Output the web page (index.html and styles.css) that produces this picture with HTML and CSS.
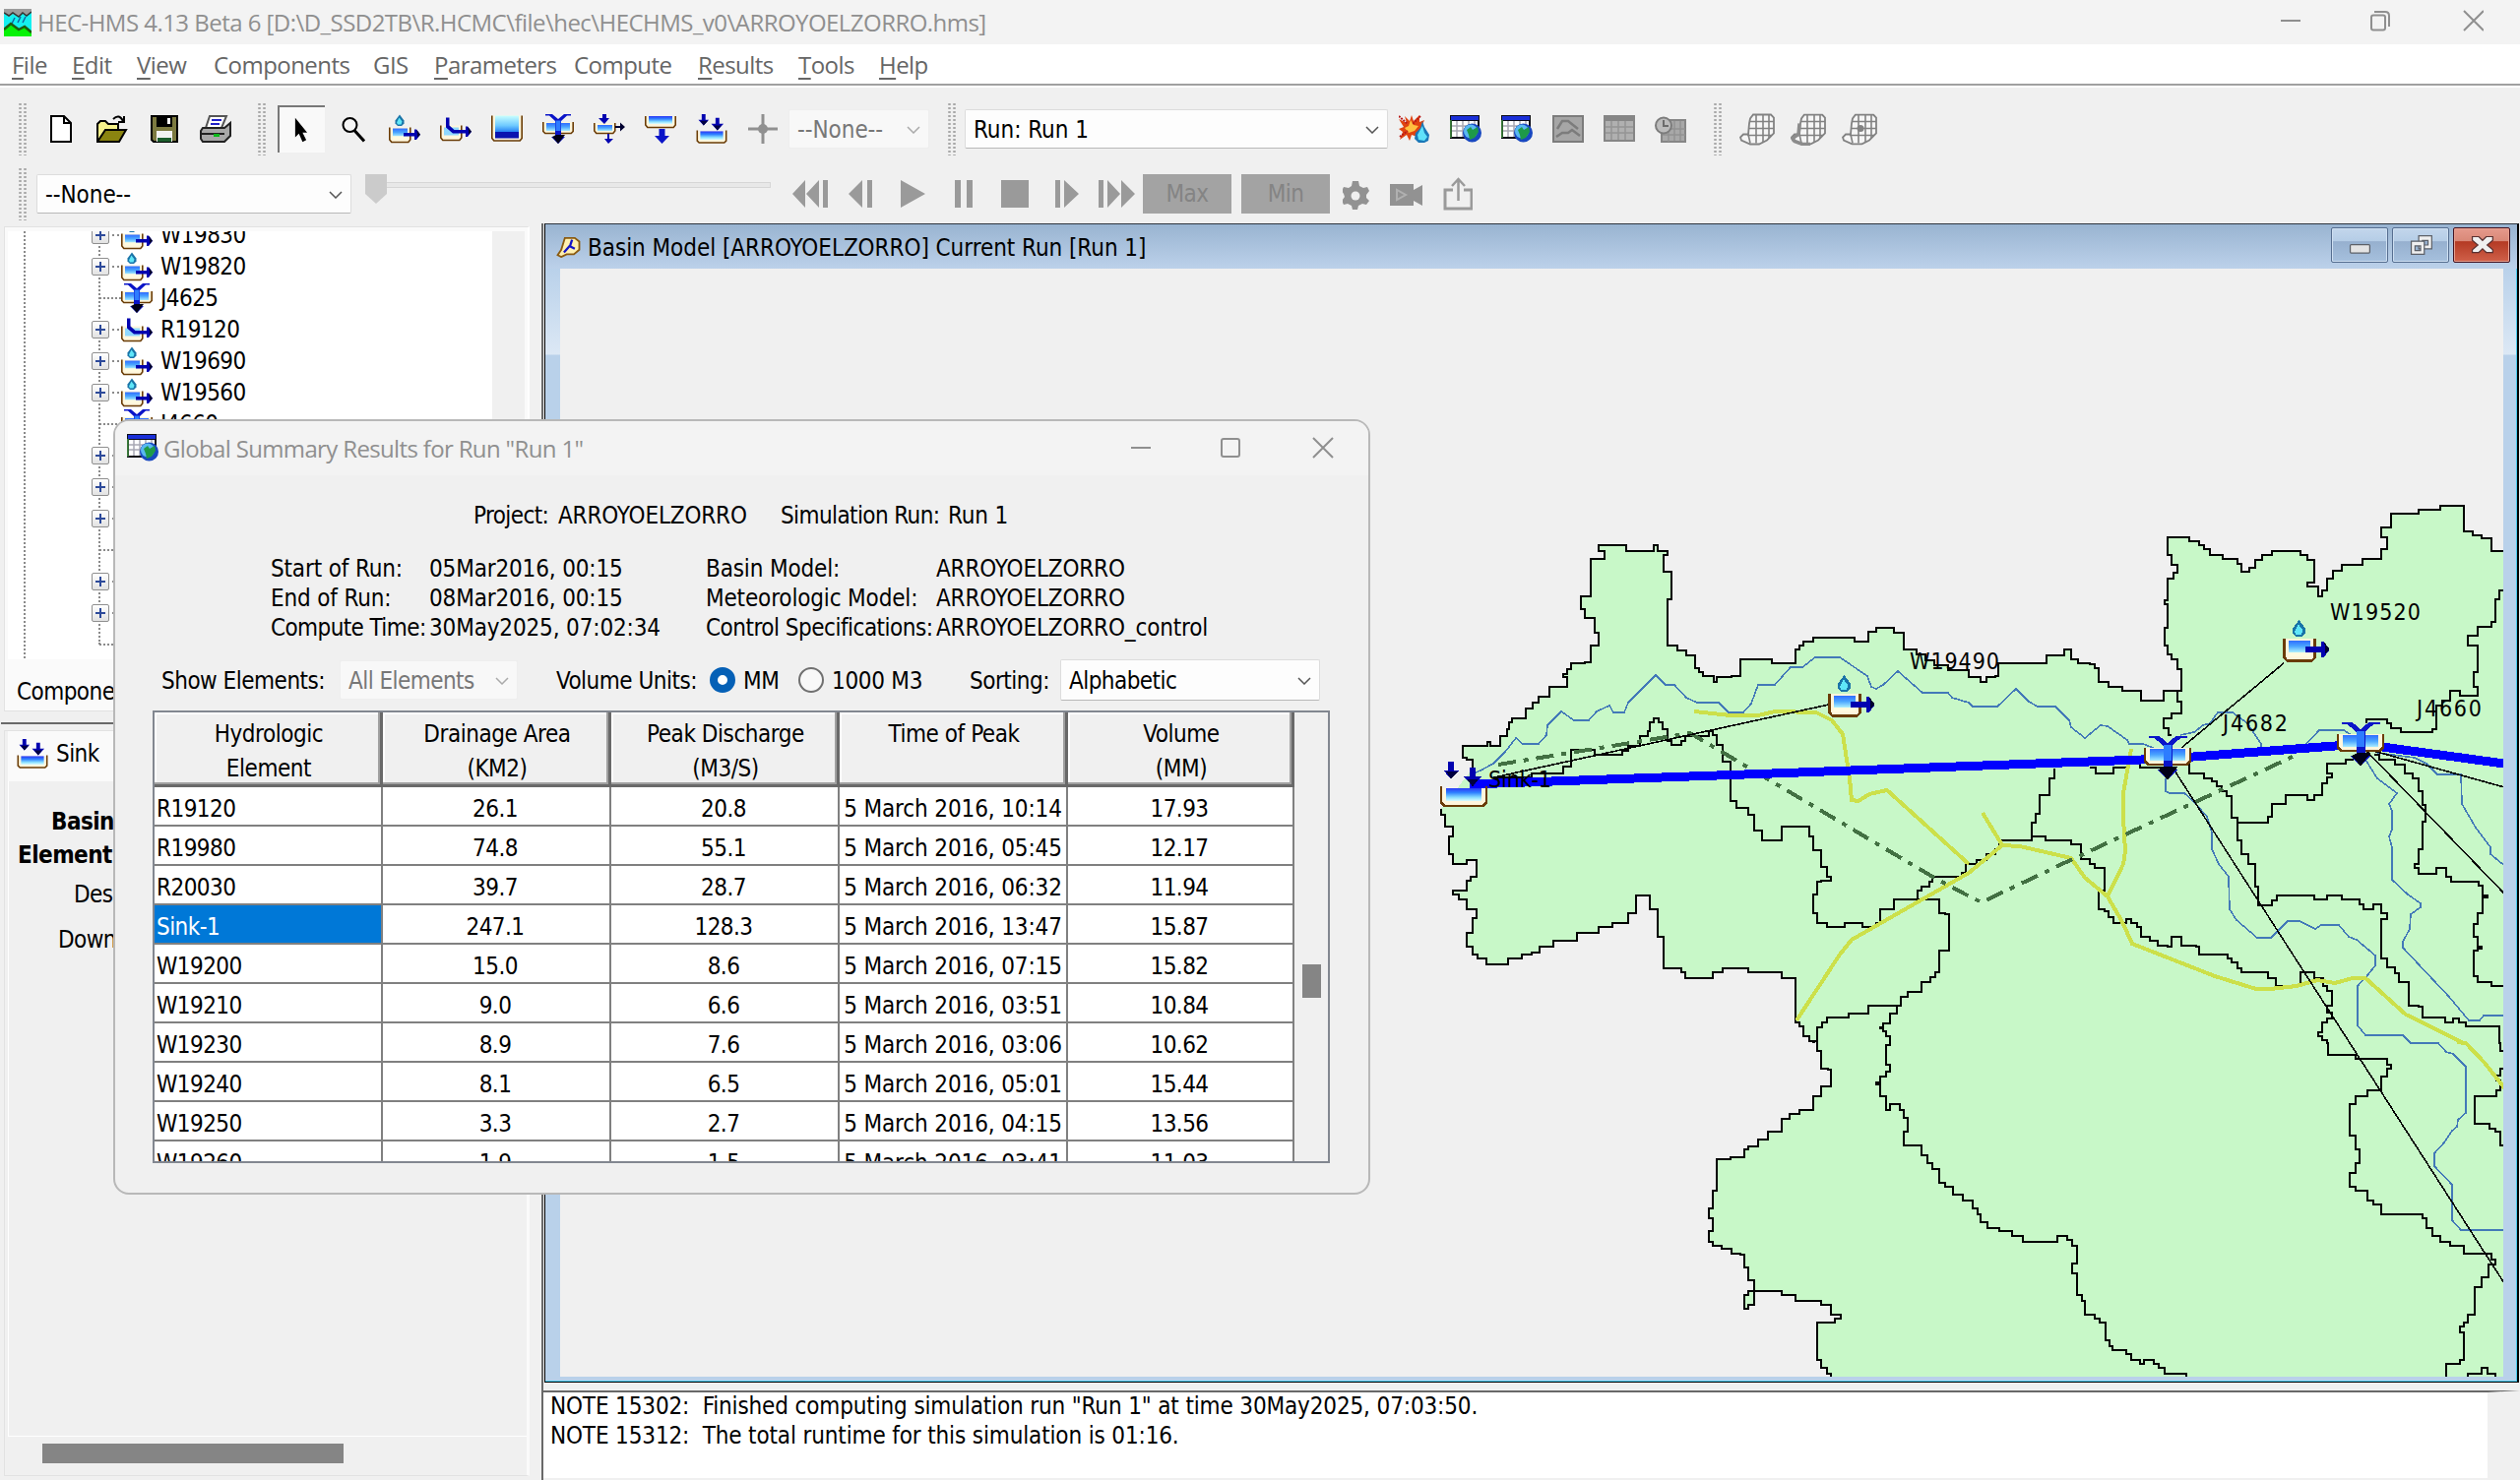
FILE: index.html
```html
<!DOCTYPE html>
<html lang="en">
<head>
<meta charset="utf-8">
<title>HEC-HMS 4.13 Beta 6</title>
<link rel="stylesheet" href="styles.css">
</head>
<body>
<svg class="defs" aria-hidden="true">
  <defs>
    <linearGradient id="gWater" x1="0" y1="0" x2="0" y2="1"><stop offset="0" stop-color="#2f6cff"/><stop offset=".5" stop-color="#4aa5ff"/><stop offset="1" stop-color="#a8ecff"/></linearGradient>
    <linearGradient id="gPool" x1="0" y1="0" x2="0" y2="1"><stop offset="0" stop-color="#c8ffff"/><stop offset=".45" stop-color="#6cc8ff"/><stop offset=".7" stop-color="#2a86f4"/><stop offset=".72" stop-color="#0a14b0"/><stop offset="1" stop-color="#0a14b0"/></linearGradient>
    <linearGradient id="gSink" x1="0" y1="0" x2="0" y2="1"><stop offset="0" stop-color="#2a35f5"/><stop offset=".35" stop-color="#2f80ff"/><stop offset=".7" stop-color="#86dcff"/><stop offset="1" stop-color="#e0ffff"/></linearGradient>
    <symbol id="sub" viewBox="0 0 32 29">
      <path d="M1 13v12l2 3h17l2-3V13" fill="#fff6dc"/><path d="M4 14h15v8H4z" fill="url(#gWater)"/><path d="M4 22h15v3H4z" fill="#fffbe0"/>
      <path d="M.8 13v12.500l2 2.500h17l2-2.500V13" fill="none" stroke="#6a3c06" stroke-width="1.600"/>
      <path d="M11 0l4.500 6v3l-2.500 2.500h-4L6.500 9V6z" fill="#1a74a8"/><path d="M10.500 3l3 4-1 3H9L8 8z" fill="#5fe6f8"/>
      <path d="M15 18.500h11V15h2l4 5.200-4 5.300h-2v-3.500H15z" fill="#0202b0"/><path d="M28 15l4 5.200-3 3v-4z" fill="#000030"/>
    </symbol>
    <symbol id="reach" viewBox="0 0 32 29">
      <path d="M1 11v12l2 3h17l2-3V11" fill="#fff6dc"/><path d="M4 13h15v8H4z" fill="#8fd8ff"/>
      <path d="M.8 11v12.500l2 2.500h17l2-2.500V11" fill="none" stroke="#6a3c06" stroke-width="1.600"/>
      <path d="M6 3h3.500v8l5 4.500H26V12h2l4 5.200-4 5.300h-2V19H13l-7-6z" fill="#0202b0"/><path d="M28 12l4 5.200-3 3v-4z" fill="#000030"/>
    </symbol>
    <symbol id="pool" viewBox="0 0 32 29"><path d="M1 1v24h30V1z" fill="#fff6dc"/><path d="M4 1h24v23H4z" fill="url(#gPool)"/><path d="M.8 1v23l2 2.500h26.400l2-2.500V1" fill="none" stroke="#6a3c06" stroke-width="1.600"/></symbol>
    <symbol id="junction" viewBox="0 0 32 30">
      <path d="M1 8v9l2 3h26l2-3V8" fill="#fff6dc"/><path d="M4 9h24v8H4z" fill="url(#gWater)"/>
      <path d="M.8 8v9.500l2 2h26.400l2-2V8" fill="none" stroke="#6a3c06" stroke-width="1.600"/>
      <path d="M3 0h7l6 5 6-5h7v1.500h-4L19 7v16h4l-7 7-7-7h4V7L7 1.500H3z" fill="#0a14c8"/><path d="M13.500 6.500h5V17h-5z" fill="#2d7cff"/><path d="M14 21h9l-7 9-6-7z" fill="#000018"/>
    </symbol>
    <symbol id="diversion" viewBox="0 0 32 30">
      <path d="M1 9v8l2 3h16l2-3V9" fill="#fff6dc"/><path d="M4 11h15v6H4z" fill="url(#gWater)"/><path d="M.8 9v8l2 2.500h17l2-2.500V9" fill="none" stroke="#6a3c06" stroke-width="1.600"/>
      <path d="M9 0h4v4h3l-5 6-6-6h4z" fill="#0202b0"/><path d="M14 20v5h-3l4 5 5-5h-4v-5z" fill="#0202b0"/><path d="M22 12h5V8.500l5 4.500-5 4.500V14h-5z" fill="#000030"/>
    </symbol>
    <symbol id="source" viewBox="0 0 32 30">
      <path d="M1 2v9l2 3h26l2-3V2" fill="#fff6dc"/><path d="M4 2h24v8H4z" fill="url(#gSink)"/><path d="M.8 2v9l2 2.500h26.400l2-2.500V2" fill="none" stroke="#6a3c06" stroke-width="1.600"/>
      <path d="M14.500 15h6v7H25l-7.500 8-7.500-8h4.500z" fill="#0a14c8"/>
    </symbol>
    <symbol id="sink" viewBox="0 0 32 31">
      <path d="M1 18v10l2 2h26l2-2V18" fill="#fff6dc"/><path d="M4 18h24v9H4z" fill="url(#gSink)"/><path d="M.8 17v11l2 2h26.400l2-2V17" fill="none" stroke="#6a3c06" stroke-width="1.600"/>
      <path d="M5.500 0h4v6h3.500L7.500 12 2 6h3.500z" fill="#0202b0"/><path d="M20 4h4v6h4.500L22 17l-6.500-7H20z" fill="#0202b0"/><path d="M4 7h8l-4.500 5zM18 12h8l-4 5z" fill="#000040"/>
    </symbol>
    <symbol id="globe" viewBox="0 0 32 28">
      <path d="M0 0h30v24H0z" fill="#0c0c18"/><path d="M1 1h28v4H1z" fill="#1a2fd8"/><path d="M2 6h26v16H2z" fill="#fff"/>
      <path d="M7 6v16M13 6v16M19 6v16M25 6v16M2 11h26M2 16h26" stroke="#a8a8b4" stroke-width="1.500"/><path d="M0 5h1.800v18H0z" fill="#3b7d3b"/>
      <circle cx="22.500" cy="18" r="9.500" fill="#1848c0"/><circle cx="21" cy="16.500" r="7" fill="#58b8f0"/><path d="M17 15l4-3 2 3 5-3 1 5-4 6-5 2-1-5z" fill="#1e9a48"/>
    </symbol>
    <symbol id="grid" viewBox="0 0 36 32">
      <path d="M14 1h18l3 3v16l-7 7-8 4h-9l-9-4-1-3 3-3h5l1-11 1-5z" fill="#f6f6f6" stroke="#828282" stroke-width="1.800"/>
      <path d="M17 1v29M24 1v28M30 1v24M10 8h25M9 15h26M8 22h25M9 21l2 9" stroke="#828282" stroke-width="1.600" fill="none"/>
    </symbol>
  </defs>
</svg>

<header class="titlebar">
  <svg class="app-icon" viewBox="0 0 28 28"><path d="M0 0h28v28H0z" fill="#14f0f0"/><path d="M0 0h28v3l-5 4-4-3-4 4-6-3-4 3-5-4z" fill="#9c9c9c"/><path d="M0 4l5 3 4-3 6 4 4-4 4 3 5-4" fill="none" stroke="#333" stroke-width="1.500"/><path d="M11 9l-3 6M17 8l-3 6M22 8l-3 6" stroke="#1464a0" stroke-width="1.500"/><path d="M0 21l7-6 8 6 6-4 7 6v5H0z" fill="#06f206"/><path d="M0 21l7-6 8 6 6-3 7 6" fill="none" stroke="#1c5c10" stroke-width="2.500"/></svg>
  <span class="segoe title-text">HEC-HMS 4.13 Beta 6 [D:\D_SSD2TB\R.HCMC\file\hec\HECHMS_v0\ARROYOELZORRO.hms]</span>
  <svg class="win-buttons" viewBox="0 0 206 24" fill="none" stroke="#8f8f8f" stroke-width="2"><path d="M0 12h20M186 2l20 20M206 2l-20 20"/><rect x="92" y="6.500" width="14" height="15" rx="2"/><path d="M95 3h11q4 0 4 4v11"/></svg>
</header>
<nav class="menubar segoe">
  <span><u>F</u>ile</span><span><u>E</u>dit</span><span><u>V</u>iew</span><span>Components</span><span>GIS</span><span><u>P</u>arameters</span><span>Compute</span><span><u>R</u>esults</span><span><u>T</u>ools</span><span><u>H</u>elp</span>
</nav>

<section class="toolbars">
  <div class="bar bar-main">
    <i class="grip"></i>
    <svg class="ic w22 new" viewBox="0 0 22 28"><path d="M1 1h13l7 7v19H1z" fill="#fff" stroke="#000" stroke-width="2"/><path d="M14 1v7h7" fill="none" stroke="#000" stroke-width="2"/></svg>
    <svg class="ic w32 open" viewBox="0 0 32 28"><path d="M1 27V9l3-3h5l3 3h10v6" fill="#f4f08a" stroke="#000" stroke-width="2"/><path d="M1 27l8-12h21l-7 12z" fill="#8a8410" stroke="#000" stroke-width="2"/><path d="M17 4q6-6 10 2M28 1v6h-6" fill="none" stroke="#000" stroke-width="2"/></svg>
    <svg class="ic w28 save" viewBox="0 0 28 28"><path d="M1 1h26v26H3l-2-2z" fill="#7c7a40" stroke="#000" stroke-width="2"/><path d="M6 1h16v11H6z" fill="#000"/><path d="M17 3h3v6h-3z" fill="#fff"/><path d="M6 16h16v11H6z" fill="#f2f2f2"/><path d="M7 23h14v4H7z" fill="#1c5c2c"/></svg>
    <svg class="ic w32 print" viewBox="0 0 32 28"><path d="M10 1h17l-5 12H6z" fill="#fff" stroke="#555" stroke-width="2"/><path d="M12 5h10M11 9h9" stroke="#2020c8" stroke-width="2"/><path d="M3 13h22l6-5v13l-6 6H3l-2-3v-8z" fill="#a8a8a8" stroke="#222" stroke-width="2"/><path d="M2 19h23" stroke="#222" stroke-width="2"/><path d="M14 19h6v3h-6z" fill="#0bb81a"/></svg>
    <i class="grip g2"></i>
    <span class="pressed"><svg viewBox="0 0 16 27"><path d="M2 0v21l4-4 4 9 4-2-4-8h5z" fill="#000"/></svg></span>
    <svg class="ic w24 lens" viewBox="0 0 24 27"><circle cx="8.500" cy="9.500" r="7" fill="#f6f6f6" stroke="#000" stroke-width="2"/><path d="M13 15l10 11" stroke="#000" stroke-width="3"/></svg>
    <div class="model-icons">
      <svg class="ic w32"><use href="#sub"/></svg><svg class="ic w32"><use href="#reach"/></svg><svg class="ic w32"><use href="#pool"/></svg><svg class="ic w32"><use href="#junction"/></svg><svg class="ic w32"><use href="#diversion"/></svg><svg class="ic w32"><use href="#source"/></svg><svg class="ic w32"><use href="#sink"/></svg>
    </div>
    <svg class="ic w30 cross" viewBox="0 0 30 30"><path d="M15 0v30M0 15h30" stroke="#909090" stroke-width="3"/><circle cx="15" cy="15" r="5" fill="#909090"/></svg>
    <div class="combo off c-none">--None--<svg class="chev" viewBox="0 0 14 8"><path d="M1 1l6 6 6-6"/></svg></div>
    <i class="grip g3"></i>
    <div class="combo c-run">Run: Run 1<svg class="chev" viewBox="0 0 14 8"><path d="M1 1l6 6 6-6"/></svg></div>
    <div class="result-icons">
      <svg class="ic w32" viewBox="0 0 32 28"><path d="M13 0l2 6 6-6 0 7 5-2-3 7-4 10-6-2-2 6-3-6-7 5 3-8-4-3 5-2-5-8 8 4-2-7 5 5z" fill="#e04410"/><path d="M12 5l3 5 5 1-4 5-6 2-4-5 4-2z" fill="#ffc040"/><path d="M0 1l9 8M22 1l-8 8M1 22l8-6" stroke="#b81818" stroke-width="2" stroke-dasharray="2 1"/><path d="M24 6l2 6 5 8-1 6-4 2h-6l-4-4 1-6 5-5z" fill="#1a78b8"/><path d="M24 11l2 7 3 4-3 4-6-1-1-5z" fill="#5fe2fa"/></svg>
      <svg class="ic w32"><use href="#globe"/></svg>
      <svg class="ic w32"><use href="#globe"/></svg>
      <svg class="ic w32" viewBox="0 0 32 28"><path d="M1 1h30v26H1z" fill="#a6a6a6" stroke="#7c7c7c" stroke-width="2"/><path d="M5 14l5-8h6l10 8M4 22l6-4h6l4-3 8 6" fill="none" stroke="#7c7c7c" stroke-width="2.500"/></svg>
      <svg class="ic w32" viewBox="0 0 32 28"><path d="M1 1h30v25H1z" fill="#b0b0b0" stroke="#868686" stroke-width="2"/><path d="M1 1h30v5H1z" fill="#868686"/><path d="M2 12h28M2 18h28M8 6v19M15 6v19M22 6v19" stroke="#949494" stroke-width="1.500"/></svg>
      <svg class="ic w32" viewBox="0 0 32 28"><path d="M7 5h24v22H7z" fill="#a8a8a8" stroke="#868686" stroke-width="2"/><path d="M8 14h23M8 20h23M14 8v19M20 6v20M26 6v20" stroke="#929292" stroke-width="1.500"/><circle cx="9" cy="10.500" r="8" fill="#bcbcbc" stroke="#7c7c7c" stroke-width="2"/><path d="M9 5v6h5" fill="none" stroke="#6c6c6c" stroke-width="2"/></svg>
    </div>
    <i class="grip g4"></i>
    <div class="grid-icons">
      <svg class="ic w36"><use href="#grid"/></svg>
      <svg class="ic w36" viewBox="0 0 36 32"><use href="#grid" width="36" height="32"/><path d="M9 10l-1 11-6 4 2 3 8 3h8" fill="none" stroke="#8c8c8c" stroke-width="3.500"/></svg>
      <svg class="ic w36" viewBox="0 0 36 32"><use href="#grid" width="36" height="32"/><circle cx="19" cy="15" r="3.500" fill="#828282"/></svg>
    </div>
  </div>
  <div class="bar bar-time">
    <i class="grip"></i>
    <div class="combo c-time">--None--<svg class="chev" viewBox="0 0 14 8"><path d="M1 1l6 6 6-6"/></svg></div>
    <div class="slider"><svg class="knob" viewBox="0 0 22 30"><path d="M0 0h22v20L11 30 0 20z" fill="#cbcbcb"/></svg><i class="track"></i></div>
    <svg class="media" viewBox="0 0 350 28" fill="#9a9a9a"><path d="M13 0v28L0 14zM27 0v28L14 14zM31 0h5v28h-5zM71 0v28L57 14zM76 0h5v28h-5zM110 0v28l25-14zM165 0h6v28h-6zM177 0h6v28h-6zM212 0h28v28h-28zM267 0h5v28h-5zM276 0v28l15-14zM311 0h5v28h-5zM320 0v28l13-14zM334 0v28l14-14z"/></svg>
    <span class="gray-btn">Max</span><span class="gray-btn min">Min</span>
    <svg class="tools" viewBox="0 0 132 34"><path d="M10 4h6l1 5 4 2 4-1 2 4-3 4 0 3 3 3-3 4-4-1-4 2-1 4h-5l-1-4-4-2-4 1-2-4 3-4-1-3-2-3 2-4 5 1 3-2z" fill="#929292"/><circle cx="13" cy="19" r="4.500" fill="#efefef"/><path d="M48 7h24v6l9-5v21l-9-5v5H48z" fill="#929292"/><path d="M55 13v10l9-5z" fill="none" stroke="#b0b0b0" stroke-width="2"/><path d="M112 13h-8v19h27V13h-8" fill="none" stroke="#9a9a9a" stroke-width="3"/><path d="M117.500 24V3M111 9l6.500-7 6.500 7" fill="none" stroke="#9a9a9a" stroke-width="2.500"/></svg>
  </div>
</section>

<main class="workspace">
  <aside class="side">
    <section class="tree-pane">
      <div class="tree">
        <div class="row"><b class="box"></b><svg class="node"><use href="#sub"/></svg>W19830</div>
        <div class="row"><b class="box"></b><svg class="node"><use href="#sub"/></svg>W19820</div>
        <div class="row"><b class="stub"></b><svg class="node"><use href="#junction"/></svg>J4625</div>
        <div class="row"><b class="box"></b><svg class="node"><use href="#reach"/></svg>R19120</div>
        <div class="row"><b class="box"></b><svg class="node"><use href="#sub"/></svg>W19690</div>
        <div class="row"><b class="box"></b><svg class="node"><use href="#sub"/></svg>W19560</div>
        <div class="row"><b class="stub"></b><svg class="node"><use href="#junction"/></svg>J4660</div>
        <div class="row"><b class="box"></b></div>
        <div class="row"><b class="box"></b></div>
        <div class="row"><b class="box"></b></div>
        <div class="row"><b class="stub"></b></div>
        <div class="row"><b class="box"></b></div>
        <div class="row"><b class="box"></b></div>
        <div class="row"><b class="stub"></b></div>
      </div>
      <div class="pane-tab">Components</div>
    </section>
    <section class="editor-pane">
      <div class="editor-tab"><svg class="node"><use href="#sink"/></svg>Sink</div>
      <div class="editor-body">
        <p class="strong basin">Basin</p><p class="strong element">Element</p><p class="desc">Desc</p><p class="down">Downs</p>
      </div>
      <div class="hscroll"><i></i></div>
    </section>
  </aside>
  <section class="desk">
    <article class="mdi">
      <header class="mdi-title">
        <svg class="mdi-icon" viewBox="0 0 26 24"><path d="M9 2h11l5 4v9l-6 5h-8l-6 3-4-2 4-6z" fill="#fff0b0" stroke="#8a5a10" stroke-width="2"/><path d="M17 4l-2 6-7 8M14 11l6 3" stroke="#1414c8" stroke-width="2.500" fill="none"/></svg>
        <span>Basin Model [ARROYOELZORRO] Current Run [Run 1]</span>
        <div class="mdi-buttons">
          <b><svg viewBox="0 0 58 36"><rect x="19" y="17.500" width="21" height="9" rx="1" fill="#e4e4e4" stroke="#5c6068" stroke-width="1.300"/></svg></b>
          <b><svg viewBox="0 0 58 36"><path d="M27 8h14v14H27zM31 13v5h6v-5z" fill="#f0f0f0" stroke="#5c6068" stroke-width="1.300" fill-rule="evenodd"/><path d="M19 14h14v14H19zM23 19v5h6v-5z" fill="#f0f0f0" stroke="#5c6068" stroke-width="1.300" fill-rule="evenodd"/></svg></b>
          <b class="close"><svg viewBox="0 0 58 36"><path d="M19 9h7l4 4 4-4h7v4l-6 5 6 5v3h-7l-4-4-4 4h-7v-3l6-5-6-5z" fill="#f0f0f0" stroke="#5a3030" stroke-width="1.300"/></svg></b>
        </div>
      </header>
      <div class="mdi-frame">
        <svg id="map" class="map" viewBox="569 273 1974 1126">
          <g id="land"></g><g id="bounds"></g><g id="rivers"></g><g id="roads"></g><g id="division"></g>
          <path class="main-reach" d="M1493 797L1800 786 2202 771 2398 756 2544 776"/>
          <g class="links"><path d="M1518 790L1858 716M2216 760L2320 674M2209 783L2544 1304M2404 763L2544 908M2411 763L2544 800"/></g>
          <g class="labels"><text x="1512" y="800" textLength="64">Sink-1</text><text x="1940" y="680" textLength="91">W19490</text><text x="2367" y="630" textLength="92">W19520</text><text x="2258" y="743" textLength="66">J4682</text><text x="2455" y="728" textLength="66">J4660</text></g>
          <use href="#sub" x="1857" y="686" width="48" height="43"/><use href="#sub" x="2319" y="630" width="48" height="43"/>
          <use href="#junction" x="2178" y="747" width="48" height="46"/><use href="#junction" x="2374" y="733" width="48" height="46"/>
          <use href="#sink" x="1463" y="773" width="48" height="48"/>
        </svg>
      </div>
    </article>
    <footer class="log"><p>NOTE 15302:&nbsp; Finished computing simulation run "Run 1" at time 30May2025, 07:03:50.</p><p>NOTE 15312:&nbsp; The total runtime for this simulation is 01:16.</p></footer>
  </section>
</main>

<div class="dialog" role="dialog">
  <header class="dlg-title">
    <svg class="dlg-icon"><use href="#globe"/></svg><span class="segoe">Global Summary Results for Run "Run 1"</span>
    <svg class="dlg-buttons" viewBox="0 0 206 22" fill="none" stroke="#8f8f8f" stroke-width="2"><path d="M0 11h20M185 1l20 20M205 1l-20 20"/><rect x="92" y="2" width="18" height="18" rx="2"/></svg>
  </header>
  <div class="project"><span class="tight">Project:</span><span>ARROYOELZORRO</span><span class="tight">Simulation Run:</span><span>Run 1</span></div>
  <div class="facts">
    <span>Start of Run:</span><span>05Mar2016, 00:15</span><span>Basin Model:</span><span>ARROYOELZORRO</span>
    <span>End of Run:</span><span>08Mar2016, 00:15</span><span>Meteorologic Model:</span><span>ARROYOELZORRO</span>
    <span class="tight">Compute Time:</span><span>30May2025, 07:02:34</span><span class="mid">Control Specifications:</span><span>ARROYOELZORRO_control</span>
  </div>
  <div class="filters">
    <span class="f-show">Show Elements:</span>
    <div class="combo off c-all">All Elements<svg class="chev" viewBox="0 0 14 8"><path d="M1 1l6 6 6-6"/></svg></div>
    <span class="f-vol">Volume Units:</span><i class="radio on"></i><span class="f-mm">MM</span><i class="radio"></i><span class="f-m3">1000 M3</span>
    <span class="f-sort">Sorting:</span>
    <div class="combo c-sort">Alphabetic<svg class="chev" viewBox="0 0 14 8"><path d="M1 1l6 6 6-6"/></svg></div>
  </div>
  <div class="grid-box">
    <div class="table">
      <div class="tr head"><span>Hydrologic<br>Element</span><span>Drainage Area<br>(KM2)</span><span>Peak Discharge<br>(M3/S)</span><span>Time of Peak</span><span>Volume<br>(MM)</span></div>
      <div class="tr"><span>R19120</span><span>26.1</span><span>20.8</span><span>5 March 2016, 10:14</span><span>17.93</span></div>
      <div class="tr"><span>R19980</span><span>74.8</span><span>55.1</span><span>5 March 2016, 05:45</span><span>12.17</span></div>
      <div class="tr"><span>R20030</span><span>39.7</span><span>28.7</span><span>5 March 2016, 06:32</span><span>11.94</span></div>
      <div class="tr"><span class="sel">Sink-1</span><span>247.1</span><span>128.3</span><span>5 March 2016, 13:47</span><span>15.87</span></div>
      <div class="tr"><span>W19200</span><span>15.0</span><span>8.6</span><span>5 March 2016, 07:15</span><span>15.82</span></div>
      <div class="tr"><span>W19210</span><span>9.0</span><span>6.6</span><span>5 March 2016, 03:51</span><span>10.84</span></div>
      <div class="tr"><span>W19230</span><span>8.9</span><span>7.6</span><span>5 March 2016, 03:06</span><span>10.62</span></div>
      <div class="tr"><span>W19240</span><span>8.1</span><span>6.5</span><span>5 March 2016, 05:01</span><span>15.44</span></div>
      <div class="tr"><span>W19250</span><span>3.3</span><span>2.7</span><span>5 March 2016, 04:15</span><span>13.56</span></div>
      <div class="tr"><span>W19260</span><span>1.9</span><span>1.5</span><span>5 March 2016, 03:41</span><span>11.03</span></div>
    </div>
    <div class="vscroll"><i></i></div>
  </div>
</div>
<script src="map.js"></script>
</body>
</html>
```
FILE: styles.css
```css
* { box-sizing: border-box; }
body { margin: 0; width: 2560px; height: 1504px; overflow: hidden; display: flex; flex-direction: column; background: #f0f0f0; color: #000; font: 24px/30px "DejaVu Sans Condensed", "DejaVu Sans", sans-serif; font-stretch: condensed; letter-spacing: -0.55px; position: relative; white-space: nowrap; }
p { margin: 0; }
svg { display: block; flex: none; }
.defs { position: absolute; width: 0; height: 0; }
.segoe { font-family: "Open Sans", "Noto Sans", sans-serif; font-stretch: normal; letter-spacing: -0.54px; }

.titlebar { height: 45px; flex: none; background: #f3f3f3; display: flex; align-items: center; padding: 0 37px 0 4px; color: #8f8f8f; }
.app-icon { width: 28px; height: 28px; }
.title-text { margin-left: 6px; flex: 1; padding-top: 1px; }
.win-buttons { width: 206px; height: 24px; margin-bottom: 4px; }
.menubar { height: 44px; flex: none; background: #fff; border-bottom: 2px solid #fff; box-shadow: inset 0 -2px #a0a0a0; display: grid; grid-template-columns: 61px 66px 78px 162px 62px 142px 126px 102px 82px 100px; padding: 6px 0 0 12px; color: #666; }
.menubar u { text-decoration-thickness: 2px; text-underline-offset: 4px; }

.toolbars { height: 138px; flex: none; padding-top: 14px; }
.bar { display: flex; align-items: center; height: 56px; padding-left: 18px; }
.bar-time { height: 54px; margin-top: 11px; }
.grip { width: 9px; height: 54px; flex: none; background: radial-gradient(circle, #a8a8a8 1px, transparent 1.5px) 0 0 / 5px 4px; }
.ic { height: 28px; }
.w22 { width: 22px; } .w24 { width: 24px; } .w28 { width: 28px; } .w30 { width: 30px; height: 30px; } .w32 { width: 32px; height: 30px; } .w36 { width: 36px; height: 33px; }
.new { margin-left: 24px; } .open { margin-left: 25px; } .save { margin-left: 23px; } .print { margin-left: 22px; }
.g2 { margin-left: 26px; }
.pressed { width: 48px; height: 48px; margin-left: 12px; background: #f9f9f9; border-left: 2px solid #787878; border-top: 2px solid #787878; display: flex; align-items: center; justify-content: center; }
.pressed svg { width: 15px; height: 27px; margin-right: 4px; }
.lens { margin-left: 17px; }
.model-icons { display: flex; gap: 20px; margin-left: 24px; }
.cross { margin-left: 21px; }
.combo { height: 40px; flex: none; background: #fdfdfd; border: 1px solid #dcdcdc; border-bottom-color: #b8b8b8; border-radius: 2px; display: flex; align-items: center; justify-content: space-between; padding: 2px 8px 0 8px; letter-spacing: -0.05px; }
.combo.off { color: #777; background: #f8f8f8; border-color: #eee; }
.chev { width: 14px; height: 8px; fill: none; stroke: #555; stroke-width: 1.5; }
.off .chev { stroke: #aaa; }
.c-none { width: 143px; margin-left: 11px; }
.g3 { margin-left: 18px; }
.c-run { width: 430px; margin-left: 9px; }
.result-icons { display: flex; gap: 20px; margin-left: 11px; }
.g4 { margin-left: 27px; }
.grid-icons { display: flex; gap: 16px; margin-left: 18px; }
.c-time { width: 320px; margin-left: 10px; }
.slider { display: flex; margin-left: 14px; height: 40px; }
.knob { width: 22px; height: 30px; }
.track { width: 390px; height: 6px; margin-top: 8px; border: 1px solid #d6d6d6; border-left: 0; background: #e8e8e8; }
.media { width: 350px; height: 28px; margin-left: 22px; }
.gray-btn { width: 90px; height: 40px; margin-left: 6px; background: #a3a3a3; color: #848484; text-align: center; line-height: 40px; }
.gray-btn.min { margin-left: 10px; }
.tools { width: 132px; height: 34px; margin-left: 13px; }

.workspace { flex: 1; display: flex; min-height: 0; }
.side { width: 552px; flex: none; border-right: 2px solid #696969; padding: 3px 12px 0 4px; display: flex; flex-direction: column; }
.tree-pane { height: 493px; border: 1px solid #e2e2e2; border-right: 2px solid #fff; background: #fafafa; padding: 4px 3px 0; }
.tree { height: 435px; background: #fff; border-right: 33px solid #f0f0f0; overflow: hidden; position: relative; padding-left: 85px; }
.tree::before { content: ""; position: absolute; left: 16px; top: 0; height: 434px; border-left: 2px dotted #8a8a8a; }
.tree::after { content: ""; position: absolute; left: 92px; top: 0; height: 420px; border-left: 2px dotted #8a8a8a; z-index: 0; }
.row { height: 32px; display: flex; align-items: center; position: relative; z-index: 1; }
.row:first-child { margin-top: -12px; }
.box { width: 18px; height: 18px; background: linear-gradient(#2d4a9a, #2d4a9a) center / 10px 2px no-repeat, linear-gradient(#2d4a9a, #2d4a9a) center / 2px 10px no-repeat, linear-gradient(#fff, #e2e2e2); border: 1px solid #8f8f8f; border-radius: 2px; margin-right: 12px; position: relative; }
.box::after { content: ""; position: absolute; left: 20px; top: 7px; width: 7px; border-top: 2px dotted #8a8a8a; }
.stub { width: 22px; margin: 0 0 0 8px; border-top: 2px dotted #8a8a8a; }
.node { width: 32px; height: 30px; margin-right: 8px; }
.pane-tab { padding: 18px 0 0 9px; }
.editor-pane { position: relative; margin: 19px 0 4px; flex: 1; border: 1px solid #e2e2e2; border-right: 3px solid #fafafa; display: flex; flex-direction: column; padding-left: 3px; }
.editor-pane::before { content: ""; position: absolute; left: -4px; top: -9px; width: 545px; height: 2px; background: #696969; }
.editor-tab { height: 51px; background: #fafafa; display: flex; align-items: center; padding: 0 0 6px 9px; }
.editor-body { flex: 1; padding-top: 26px; border-left: 1px solid #fff; }
.strong { font-weight: bold; height: 34px; }
.basin { padding-left: 43px; } .element { padding-left: 9px; }
.desc { padding-left: 66px; margin-top: 6px; } .down { padding-left: 50px; margin-top: 16px; }
.hscroll { height: 40px; border-top: 1px solid #fff; padding: 7px 0 0 35px; }
.hscroll i { display: block; width: 306px; height: 20px; background: #858585; }

.desk { flex: 1; display: flex; flex-direction: column; padding-left: 1px; }
.mdi { height: 1178px; display: flex; flex-direction: column; border: 1px solid #000; border-right-width: 2px; border-top-color: #2f3640; margin-right: 1px; box-shadow: inset -1px -1px #4ccdf0; }
.mdi-title { height: 45px; flex: none; display: flex; align-items: center; background: linear-gradient(#99b4d1, #bcd1ea); padding: 0 7px 0 11px; }
.mdi-icon { width: 25px; height: 22px; }
.mdi-title span { margin-left: 7px; flex: 1; padding-top: 2px; letter-spacing: -0.05px; }
.mdi-buttons { display: flex; gap: 4px; margin-bottom: 3px; }
.mdi-buttons b { width: 58px; height: 36px; border: 1px solid #566e90; border-radius: 2px; box-shadow: inset 0 0 0 1px #cfe0f2; background: linear-gradient(#c3d6ec, #b5cde6 38%, #96b0cf 40%, #a6c0dd); }
.mdi-buttons .close { border-color: #431422; box-shadow: inset 0 0 0 1px #e8a090; background: linear-gradient(#e59a8c, #d98878 38%, #b43a24 40%, #d0614a); }
.mdi-buttons svg { width: 56px; height: 34px; }
.mdi-frame { flex: 1; background: linear-gradient(#b9d1ea 0, #dce8f5 87px, #b9d1ea 88px); margin: 0 1px 1px 0; padding: 0 13px 4px 15px; min-height: 0; }
.map { width: 1974px; height: 1126px; background: #f0f0f0; shape-rendering: crispEdges; }
#land path { fill: #c8f8c8; }
#bounds path { fill: none; stroke: #000; stroke-width: 2; }
#rivers path { fill: none; stroke: #4379b8; stroke-width: 1.6; }
#roads path { fill: none; stroke: #cce04a; stroke-width: 4; }
#division path { fill: none; stroke: #427042; stroke-width: 4; stroke-dasharray: 18 8 5 8; }
.main-reach { fill: none; stroke: #00f; stroke-width: 9; }
.links path { stroke: #000; stroke-width: 1.6; fill: none; }
.labels text { font-size: 23px; letter-spacing: 0; fill: #000; }
.log { flex: 1; margin-top: 8px; margin-left: -1px; border-top: 2px solid #696969; border-right: 33px solid #f0f0f0; border-bottom: 2px solid #f0f0f0; background: #fff; padding: 0 0 0 7px; letter-spacing: -0.14px; }
.log p { position: relative; top: -1px; }

.dialog { position: absolute; z-index: 5; left: 115px; top: 426px; width: 1277px; height: 788px; background: #f0f0f0; border: 2px solid #b8b8b8; border-radius: 16px; overflow: hidden; letter-spacing: -0.15px; }
.dlg-title { height: 55px; background: #f3f3f3; display: flex; align-items: center; color: #8f8f8f; padding: 0 35px 0 12px; }
.dlg-icon { width: 32px; height: 28px; margin-bottom: 1px; }
.dlg-title span { margin-left: 5px; flex: 1; padding-top: 1px; letter-spacing: -0.65px; }
.dlg-buttons { width: 206px; height: 22px; margin-bottom: 2px; }
.tight { letter-spacing: -0.6px; } .mid { letter-spacing: -0.5px; }
.project { display: grid; grid-template-columns: 86px 226px 170px 80px; padding: 26px 0 0 364px; }
.facts { display: grid; grid-template-columns: 161px 281px 234px 300px; padding: 24px 0 0 158px; }
.filters { display: flex; align-items: center; height: 44px; margin: 16px 0 0 47px; letter-spacing: -0.5px; }
.filters > span { padding-top: 2px; }
.filters .combo { letter-spacing: -0.55px; }
.f-show { width: 181px; } .c-all { width: 181px; } .f-vol { margin-left: 39px; width: 156px; } .f-mm { margin-left: 8px; width: 56px; } .f-m3 { margin-left: 8px; width: 140px; letter-spacing: -0.3px; } .f-sort { width: 92px; } .c-sort { width: 264px; height: 42px; }
.radio { width: 26px; height: 26px; flex: none; border: 2px solid #707070; border-radius: 50%; background: #f8f8f8; }
.radio.on { border: 8px solid #0560b6; background: #fff; }
.grid-box { margin: 9px 0 0 38px; width: 1196px; height: 460px; border: 2px solid #828790; display: flex; overflow: hidden; }
.table { width: 1158px; background: #fff; }
.tr { display: grid; grid-template-columns: repeat(4, 232px) 230px; height: 40px; }
.tr span { border-right: 2px solid #808080; border-bottom: 2px solid #808080; text-align: center; line-height: 44px; padding-right: 2px; overflow: hidden; letter-spacing: -0.55px; }
.tr span:nth-child(4) { letter-spacing: -0.13px; padding-right: 0; }
.tr span:first-child { text-align: left; padding-left: 2px; }
.tr span.sel { background: #0078d7; color: #fff; }
.tr.head { height: 76px; }
.tr.head span { background: #f0f0f0; line-height: 35px; padding: 5px 0 0 3px; text-align: center; border-right: 3px solid #696969; border-bottom: 3px solid #696969; box-shadow: inset -2px -2px #a0a0a0, inset 2px 2px #fff; letter-spacing: -0.45px; }
.vscroll { flex: 1; padding: 256px 0 0 8px; background: #f0f0f0; }
.vscroll i { display: block; width: 19px; height: 34px; background: #858585; }
```
FILE: map.js
```javascript
// Basin map geometry. Every line is digitised on one of three sheets
// (W, E, S); a sheet letter in the list switches the active sheet.
const SHEETS = {
  W: { x: 1440, y: 480, sx: 2.8, sy: 2.7034 },
  E: { x: 2000, y: 480, sx: 2.7946, sy: 2.7034 },
  S: { x: 1700, y: 940, sx: 1.8209, sy: 2.7801 }
};

const NORTH = `W 158,815 158,790 141,785 130,772 130,752 198,752 198,741 208,741 208,752 236,752 236,725 256,705 260,686 270,676 308,676 308,650 345,617 375,614 375,590 426,590 426,563 415,555 436,525 477,523 494,500 494,476 515,462 515,440 503,436 503,400 475,388 475,377 465,377 465,340 493,340 493,238 532,238 532,215 515,215 515,200 594,200 594,216 672,216 672,200 683,200 683,216 711,216 711,226 700,226 700,274 722,292 722,350 711,350 711,475 740,490 790,514 790,538 812,560 842,563 842,577 852,577 852,563 892,560 918,540 918,514 1007,514 1007,524 1045,524 1075,512 1075,487 1098,465 1125,454 1242,454 1242,465 1262,465 1283,450 1283,438 1305,428 1333,428 1355,440 1383,454 1383,487 1410,487 1420,500 1470,530 1510,543 1568,555
E 0,562 33,562 33,576 50,576 50,562 75,560 85,545 85,524 200,524 220,503 270,503 270,487 292,487 292,514 310,524 345,526 370,550 370,577 397,577 397,590 436,590 436,600 477,600 488,626 537,626 553,615 553,600 593,600 605,575 605,540 593,514 575,514 575,500 564,476 555,476 555,428 564,428 564,362 555,362 555,352 564,352 564,292 580,292 580,276 593,276 593,255 577,255 577,228 564,228 564,179 627,179 627,190 655,190 655,201 668,212 685,227 722,227 722,238 762,240 762,252 773,252 773,273 784,273 797,262 812,240 834,228 862,216 942,216 942,228 962,240 980,254 980,303 962,303 962,313 991,313 991,340 1002,340 1002,325 1018,325 1018,292 1035,270 1058,254 1118,254 1118,238 1171,238 1171,212 1187,212 1187,179 1171,179 1171,152 1198,152 1198,114 1276,114 1276,102 1338,102 1338,91 1405,91 1405,162 1432,162 1432,173 1455,180 1485,200 1485,216 1505,216 1530,228`;

const SOUTH = `W 67,925 67,940 78,943 78,973 100,973 100,1000 90,1000 90,1048 101,1050 101,1075 140,1075 140,1064 168,1064 168,1112 150,1122 140,1130 140,1150 101,1150 101,1160 117,1163 117,1173 140,1188 140,1200 168,1200 168,1225 157,1227 157,1265 140,1265 140,1302 157,1305 157,1325 170,1335 195,1337 195,1351 258,1351 258,1336 297,1336 297,1325 325,1320 347,1303 387,1303 387,1287 436,1287 453,1265 515,1265 515,1249 555,1249 555,1238 583,1238 598,1212 621,1210 621,1162 661,1162 661,1200 683,1200 683,1275 700,1275 700,1362 750,1362 750,1373 762,1389 840,1389 840,1373 868,1373 868,1362 942,1362 942,1373 1035,1373 1035,1389 1075,1389 1075,1512 1087,1523 1098,1537 1098,1550 1115,1562 1125,1565
S 260,328 266,340 266,355 273,355 273,405 285,410 292,420 292,456 273,456 273,485 258,497 258,522 233,535 215,547 200,562 200,583 182,583 175,605 157,625 138,634 131,655 105,662 80,672 80,750 73,750 73,800 66,800 66,828 73,828 73,866 66,868 66,895 73,906 90,915 108,928 124,930 131,945 131,967 138,967 138,1005 149,1005 149,1073 138,1073 138,1084 131,1084 131,1045 138,1045 138,1034 200,1034 200,1045 226,1050 226,1062 273,1062 273,1073 292,1073 292,1101 310,1101 310,1112 298,1112 298,1123 266,1123 266,1228 273,1228 273,1250 284,1252 284,1268 292,1270 292,1282`;

const INNER = [
  `E 1520,325 1507,325 1507,350 1496,362 1496,410 1485,425 1445,440 1445,450 1416,465 1416,475 1433,475 1445,487 1445,550 1433,553 1433,588 1445,590 1445,615 1394,615 1394,600 1366,600 1366,626 1345,640 1328,650 1328,705 1317,713 1228,713 1228,703 1198,690 1187,678 1150,678 1130,690`,
  `E 593,600 593,630 605,636 605,662 577,664 577,675 553,690 553,703 566,712 566,722 577,722`,
  `W 215,838 325,827 415,827 415,808 436,795 436,763 503,763 503,777 583,777 583,765 598,752 632,752 632,725 655,710 662,688 672,688 672,676 683,676 685,688 698,688 698,705 711,712 711,738 722,738 722,750 750,750 750,738 762,725 830,722 830,710 840,710 840,722 852,735 852,750 868,765 868,795 890,815 890,902 907,905 907,923 940,940 958,962 958,985 980,1000 980,1011 1035,1011 1035,973 1115,973 1115,1000 1126,1010 1126,1037 1148,1050 1148,1085 1165,1088 1165,1112 1176,1115 1176,1123 1148,1125 1137,1137 1137,1160 1125,1163 1125,1210 1137,1215 1137,1238 1165,1240 1165,1248 1215,1248 1215,1238 1265,1238 1265,1248 1305,1248 1305,1238 1316,1238 1316,1200 1355,1188 1355,1173 1422,1173 1422,1150 1433,1150 1433,1137 1455,1125 1465,1112 1537,1112 1560,1090 1560,1077 1568,1077
E 0,1077 22,1077 22,1064 50,1064 50,1050 75,1035 87,1023 87,1011 180,1011 180,1000 217,1000 217,1011 292,1011 292,1023 318,1037 318,1062 345,1075 357,1088 387,1102 387,1150 370,1150 370,1200 387,1205 397,1223 410,1238 447,1238 447,1227 460,1227 460,1238 477,1248 488,1262 488,1275 515,1275 515,1287 537,1300 565,1303 575,1290 575,1277 592,1277 605,1300 645,1303 655,1325 722,1325 745,1345 762,1362 773,1373 850,1373 850,1389 872,1400 872,1411 928,1411 943,1400 943,1373 980,1373 980,1389 1007,1395 1007,1411 1018,1425 1030,1438 1030,1465 1018,1468 1018,1485 1030,1500 1018,1512 1002,1515 1002,1537 991,1540 991,1550 1002,1560 1018,1568
S 1210,334 1210,367 1262,367 1262,378 1320,378 1320,395 1327,395 1327,405 1320,410 1320,428 1309,428 1309,467 1284,467 1284,484 1262,484 1262,506 1251,506 1251,595 1262,595 1262,634 1269,634 1269,672 1262,672 1262,700 1251,700 1251,740 1262,740 1262,750 1284,750 1284,778 1295,790 1309,802 1309,818 1386,818 1386,828 1393,856 1404,856 1404,878 1419,880 1419,895 1437,906 1455,906 1462,928 1513,928 1513,945 1520,945 1520,960 1508,965 1508,995 1495,995 1495,1022 1482,1045 1482,1101 1470,1101 1470,1123 1462,1135 1455,1135 1455,1150 1462,1152 1462,1228 1455,1240 1437,1240 1430,1250 1430,1282`,
  `W 1422,1173 1485,1173 1485,1210 1500,1215 1512,1227 1512,1314 1485,1325 1485,1373 1460,1400 1433,1415 1433,1427 1395,1440 1375,1465 1293,1465 1283,1487 1226,1487 1226,1497 1176,1497 1165,1512 1137,1537 1137,1562 1125,1565`,
  `S 420,228 413,250 401,262 401,278 388,290 383,292 388,300 394,315 401,328 401,340 394,340 394,395 401,395 401,415 394,428 383,432 383,445 376,450 383,458 383,485 394,485 394,522 400,522 400,506 419,506 419,522 427,522 427,545 434,545 434,583 427,583 427,622 459,622 459,650 470,650 470,672 478,690 492,690 492,728 503,728 503,740 518,740 518,762 536,762 536,778 554,778 554,800 562,800 562,818 569,818 569,840 580,840 580,856 602,856 602,866 627,868 627,878 646,878 646,895 711,895 711,878 729,878 729,890 737,906 747,906 747,956 737,956 737,984 747,984 747,1045 755,1050 755,1062 762,1062 762,1101 780,1101 780,1112 788,1123 799,1123 799,1173 806,1173 806,1190 813,1200 838,1200 838,1212 846,1228 864,1228 864,1240 871,1240 871,1228 889,1228 889,1240 897,1250 908,1250 908,1268 948,1268 948,1282`,
  `S 1470,1282 1470,1268 1495,1268 1495,1250 1506,1250 1506,1268 1520,1268 1520,1275`,
  `E 242,815 242,840 230,845 230,886 202,886 202,938 190,940 190,962 180,965 180,1000`,
  `E 345,812 360,812 360,826 410,826 410,812 450,810`,
  `E 485,802 485,811 560,811`,
  `E 627,800 627,826 665,826 668,840 690,850 717,875 732,890 745,902 745,950 762,962 762,1011 773,1011 773,1050 795,1050 795,1075 812,1078 812,1137 823,1160 823,1190 862,1188 862,1175 875,1162 980,1162 980,1173 1018,1173 1018,1162 1058,1162 1058,1173 1110,1175 1110,1188 1122,1200 1148,1200 1148,1188 1171,1188 1171,1212 1187,1212 1187,1227 1171,1227 1171,1335 1187,1337 1187,1360 1210,1375 1222,1400 1249,1411 1249,1465 1276,1468 1287,1497 1353,1497 1353,1512 1375,1512 1375,1500 1392,1500 1392,1512 1410,1523 1507,1525 1507,1568 S 1530,355 1537,355`,
  `E 762,962 834,962 850,945 862,930 862,912 900,900 900,886 962,886 962,900 980,900 980,888 1002,870 1002,853 1018,838 1030,826 1018,826 1018,800 1070,800 1070,790 1090,788`,
  `E 1150,775 1165,790 1210,790 1210,802 1238,802 1238,826 1260,840 1276,850 1276,875 1287,880 1287,915 1298,925 1298,960 1287,962 1287,1035 1276,1037 1276,1075 1265,1075 1265,1088 1276,1102 1327,1102 1327,1088 1355,1088 1355,1112 1370,1125 1433,1125 1460,1145 1460,1162 1473,1168 1460,1175 1460,1210 1445,1215 1445,1240 1433,1240 1433,1275 1445,1280 1445,1303 1455,1308 1445,1315 1433,1337 1433,1385 1445,1385 1445,1400 1483,1400 1483,1411 1520,1411`,
  `S 1537,405 1530,405 1530,425 1522,430 1522,440 1530,450 1530,467 1522,484 1490,484 1482,495 1482,562 1506,562 1510,575 1520,583 1530,600 1530,622 1537,622`
];

const RIVERS = [
  `W 165,825 180,820 215,800 250,768 280,730 300,745 345,745 368,722 370,695 410,658 445,681 488,681 510,658 545,642 558,659 588,659 600,632 677,557 705,583 730,583 765,618 795,632 858,632 885,659 928,659 950,635 968,585 1015,583 1062,536 1095,534 1130,508 1200,508 1280,560 1290,590 1305,595 1325,585 1367,546 1437,605 1510,606 1520,620 1568,633 E 0,633 10,643 80,643 134,594 170,630 195,643 247,643 285,680 290,700 330,731 375,696 395,698 450,735 455,745 495,747 530,760`,
  `E 600,722 640,715 665,695 685,690 708,659 748,659 790,690 830,745 830,760`,
  `E 955,750 995,708 1065,708 1090,725`,
  `E 560,840 560,875 570,881 612,881 640,905 675,945 690,990 690,1035 710,1075 738,1110 740,1200 760,1230 818,1280 858,1280 905,1232 938,1232 985,1255 1000,1243 1050,1243 1080,1275 1100,1285 1155,1328 1155,1355 1135,1380 1103,1410 1103,1520 1125,1545 S 1280,311 1350,311 1363,333 1415,333 1430,358 1442,365 1466,400 1466,530 1452,550 1450,570 1440,580 1425,615 1408,645 1408,680 1440,735 1441,835 1457,861 1540,861`,
  `E 1125,790 1160,840 1215,880 1192,912 1203,930 1203,980 1192,1000 1203,1030 1203,1120 1245,1160 1283,1185 1283,1195 1255,1215 1253,1255 1233,1290 1233,1305 1365,1440 1420,1507 1450,1507 1462,1492 1525,1492`,
  `E 1160,770 1265,785 1300,800 1330,831 1398,831 1400,910 1440,975 1480,1030 1480,1048 1525,1084`
];

const ROADS = [
  `W 788,656 890,668 970,668 1015,656 1135,660 1180,680 1210,720 1228,840 1235,900 1255,902 1285,885 1335,872 1568,1075`,
  `W 1078,1505 1200,1325 1235,1285 1568,1100 E 95,1025 40,935`,
  `E 95,1025 145,1028 290,1060 330,1115 395,1165 440,1075 445,1040 438,950 440,880 462,760`,
  `E 395,1165 435,1235 465,1295 700,1385 815,1418 855,1418 930,1410 990,1395 1040,1402 1090,1390 1125,1390 1240,1490 1400,1565 S 1450,330 1466,333 1500,390 1540,468`
];

const DIVISION = [`W 230,803 775,716 1455,1105 1555,1158 E 35,1182 270,1072 920,782`];

function points(src) {
  let s = SHEETS.W;
  const out = [];
  for (const token of src.trim().split(/\s+/)) {
    if (SHEETS[token]) { s = SHEETS[token]; continue; }
    const [x, y] = token.split(',').map(Number);
    out.push([Math.round(s.x + x / s.sx), Math.round(s.y + y / s.sy)]);
  }
  return out;
}

// Watershed borders follow raster cells, so diagonals become stairs.
function stairs(pts) {
  const out = [pts[0]];
  for (let i = 1; i < pts.length; i++) {
    const [x0, y0] = pts[i - 1], [x1, y1] = pts[i];
    const dx = x1 - x0, dy = y1 - y0;
    const n = Math.max(1, Math.round(Math.min(Math.abs(dx), Math.abs(dy)) / 5));
    for (let k = 1; k <= n; k++) {
      const x = Math.round(x0 + dx * k / n), y = Math.round(y0 + dy * k / n);
      out.push([x, out[out.length - 1][1]], [x, y]);
    }
  }
  return out;
}

function draw(id, pts, close) {
  const p = document.createElementNS('http://www.w3.org/2000/svg', 'path');
  p.setAttribute('d', 'M' + pts.map(q => q.join(' ')).join('L') + (close ? 'Z' : ''));
  document.getElementById(id).appendChild(p);
}

const north = stairs(points(NORTH)), south = stairs(points(SOUTH));
draw('land', [...north, [2550, 565], [2550, 1402], ...south.slice().reverse()], true);
draw('bounds', north);
draw('bounds', south);
INNER.forEach(s => draw('bounds', stairs(points(s))));
RIVERS.forEach(s => draw('rivers', points(s)));
ROADS.forEach(s => draw('roads', points(s)));
DIVISION.forEach(s => draw('division', points(s)));
```
